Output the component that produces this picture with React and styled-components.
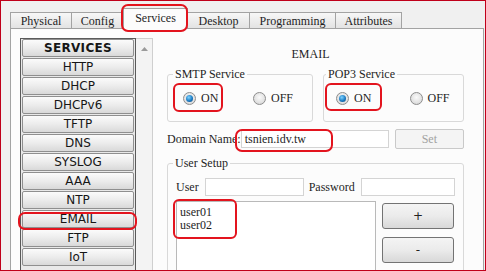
import React from 'react';
import styled, { createGlobalStyle, css } from 'styled-components';

const SERIF = `"Liberation Serif", "Times New Roman", serif`;
const SANS = `"DejaVu Sans", Verdana, sans-serif`;

const Global = createGlobalStyle`
  html, body { margin: 0; padding: 0; background: #f0f0f0; }
  *, *::before, *::after { box-sizing: border-box; }
`;

const Frame = styled.div`
  position: relative;
  width: 486px;
  height: 271px;
  border: 1px solid #c0001a;
  background: #f0f0f0;
  overflow: hidden;
  padding: 7px 1px 0 9px;
  display: flex;
  flex-direction: column;
  font-family: ${SERIF};
  font-size: 12px;
  color: #1e1e1e;
`;

const TabBar = styled.div`
  display: flex;
  align-items: flex-end;
  height: 20px;
  position: relative;
  z-index: 2;
`;

const Tab = styled.div`
  width: ${(p) => p.$w}px;
  height: 16px;
  margin-right: -1px;
  border: 1px solid #a3a3a3;
  border-bottom: none;
  background: linear-gradient(#f7f7f7, #e3e3e3);
  display: flex;
  align-items: center;
  justify-content: center;
  line-height: 14px;
  white-space: nowrap;
  ${(p) =>
    p.$active &&
    css`
      height: 21px;
      margin-bottom: -1px;
      background: #fcfcfc;
      position: relative;
      z-index: 3;
      padding-bottom: 2px;
    `}
`;

const Panel = styled.div`
  flex: 1;
  border: 1px solid #a3a3a3;
  border-bottom: none;
  background: #fcfcfc;
  display: flex;
  align-items: flex-start;
  padding: 9px 19px 0 9px;
  min-height: 0;
`;

const Sidebar = styled.div`
  width: 133px;
  height: 240px;
  display: flex;
  flex-shrink: 0;
`;

const ServiceList = styled.div`
  width: 116px;
  border: 1px solid #5a5a5a;
  border-bottom: none;
  padding: 0 1px;
  display: flex;
  flex-direction: column;
  gap: 1px;
  background: #e9e9e9;
`;

const ServiceButton = styled.div`
  height: 18px;
  flex-shrink: 0;
  border: 1px solid #8f8f8f;
  border-radius: 2px;
  background: linear-gradient(#fbfbfb 0%, #ececec 50%, #d9d9d9 100%);
  font-family: ${SANS};
  font-size: 12px;
  font-weight: ${(p) => (p.$head ? 'bold' : 'normal')};
  letter-spacing: ${(p) => (p.$head ? '0.3px' : '0')};
  color: #161616;
  display: flex;
  align-items: center;
  justify-content: center;
  line-height: 14px;
`;

const ScrollTrack = styled.div`
  width: 17px;
  border: 1px solid #cfcfcf;
  border-left: none;
  border-bottom: none;
  background: #f3f3f3;
  display: flex;
  justify-content: center;
  padding-top: 8px;
`;

const RightCol = styled.div`
  flex: 1;
  margin-left: 14px;
  padding-top: 9px;
  display: flex;
  flex-direction: column;
  min-width: 0;
`;

const Title = styled.div`
  text-align: center;
  padding-right: 10px;
  line-height: 14px;
  height: 14px;
`;

const GroupRow = styled.div`
  display: flex;
  gap: 10px;
  margin-top: 6px;
`;

const Group = styled.fieldset`
  margin: 0;
  width: ${(p) => (p.$w ? `${p.$w}px` : 'auto')};
  flex: ${(p) => (p.$w ? '0 0 auto' : '1')};
  border: 1px solid #d9d9d9;
  border-radius: 3px;
  padding: ${(p) => p.$pad};
  min-width: 0;
`;

const Legend = styled.legend`
  padding: 0 2px;
  line-height: 14px;
  font-size: 12px;
`;

const RadioRow = styled.div`
  display: grid;
  grid-template-columns: 1fr 1fr;
  height: 13px;
`;

const RadioItem = styled.label`
  display: flex;
  align-items: center;
  gap: ${(p) => p.$gap || 5}px;
  padding-left: ${(p) => p.$pl}px;
  line-height: 13px;
  font-size: 12px;
`;

const RadioDot = styled.span`
  width: 13px;
  height: 13px;
  border-radius: 50%;
  border: 1px solid #8d8d8d;
  background: radial-gradient(circle at 50% 40%, #fafafa 0%, #e2e2e2 60%, #cdcdcd 100%);
  display: flex;
  align-items: center;
  justify-content: center;
  flex-shrink: 0;
  &::after {
    content: '';
    display: ${(p) => (p.$on ? 'block' : 'none')};
    width: 7px;
    height: 7px;
    border-radius: 50%;
    background: radial-gradient(circle at 40% 35%, #7fd3ff 0%, #1c7cc4 55%, #0b3f75 100%);
  }
`;

const DomainRow = styled.div`
  display: flex;
  align-items: center;
  height: 20px;
  margin-top: 7px;
`;

const Label = styled.span`
  white-space: nowrap;
  line-height: 14px;
  margin-right: ${(p) => p.$mr || 0}px;
  margin-left: ${(p) => p.$ml || 0}px;
`;

const TextBox = styled.div`
  height: 18px;
  width: ${(p) => (p.$w ? `${p.$w}px` : 'auto')};
  flex: ${(p) => (p.$w ? '0 0 auto' : '1')};
  border: 1px solid #d4d4d4;
  background: #fff;
  padding: 0 3px;
  line-height: 16px;
  font-size: 12px;
  white-space: nowrap;
`;

const SetButton = styled.div`
  margin-left: 6px;
  width: 73px;
  height: 20px;
  border: 1px solid #c9c9c9;
  border-radius: 2px;
  background: #f4f4f4;
  color: #a2a2a2;
  display: flex;
  align-items: center;
  justify-content: center;
`;

const UserSetup = styled(Group)`
  margin-top: 7px;
  height: 140px;
`;

const UserRow = styled.div`
  display: flex;
  align-items: center;
  height: 18px;
`;

const ListRow = styled.div`
  display: flex;
  margin-top: 5px;
`;

const ListBox = styled.div`
  width: 200px;
  height: 90px;
  border: 1px solid #b9b9b9;
  background: #fff;
  padding: 4px 3px;
  line-height: 12.5px;
  font-size: 12px;
`;

const ButtonCol = styled.div`
  margin-left: 6px;
  padding-top: 2px;
  display: flex;
  flex-direction: column;
  gap: 8px;
`;

const ActionButton = styled.div`
  width: 72px;
  height: 26px;
  border: 1px solid #737373;
  border-radius: 3px;
  background: linear-gradient(#f4f4f4 0%, #ebebeb 50%, #d8d8d8 100%);
  display: flex;
  align-items: center;
  justify-content: center;
  font-family: ${SANS};
  font-size: 12px;
  color: #222;
`;

const Mark = styled.div`
  position: absolute;
  border: 2px solid #e3141e;
  border-radius: ${(p) => p.$r || 6}px;
  pointer-events: none;
  z-index: 10;
`;

const tabs = [
  ['Physical', 62],
  ['Config', 53],
  ['Services', 65, true],
  ['Desktop', 63],
  ['Programming', 87],
  ['Attributes', 67],
];

const services = ['HTTP', 'DHCP', 'DHCPv6', 'TFTP', 'DNS', 'SYSLOG', 'AAA', 'NTP', 'EMAIL', 'FTP', 'IoT'];

// annotation rectangles in page coordinates (frame border is 1px)
const marks = [
  { x: 121, y: 4, w: 67, h: 28, r: 7 },
  { x: 173, y: 83, w: 50, h: 29, r: 6 },
  { x: 325, y: 83, w: 57, h: 28, r: 6 },
  { x: 235, y: 129, w: 98, h: 23, r: 7 },
  { x: 18, y: 212, w: 119, h: 18, r: 7 },
  { x: 173, y: 199, w: 64, h: 40, r: 6 },
];

export default function App() {
  return (
    <>
      <Global />
      <Frame>
        <TabBar>
          {tabs.map(([t, w, a]) => (
            <Tab key={t} $w={w} $active={a}>
              {t}
            </Tab>
          ))}
        </TabBar>
        <Panel>
          <Sidebar>
            <ServiceList>
              <ServiceButton $head>SERVICES</ServiceButton>
              {services.map((s) => (
                <ServiceButton key={s}>{s}</ServiceButton>
              ))}
            </ServiceList>
            <ScrollTrack>
              <svg width="7" height="4" viewBox="0 0 7 4">
                <path d="M0 4 L3.5 0 L7 4 Z" fill="#9a9a9a" />
              </svg>
            </ScrollTrack>
          </Sidebar>
          <RightCol>
            <Title>EMAIL</Title>
            <GroupRow>
              <Group $w={146} $pad="11px 0 16px 0">
                <Legend style={{ marginLeft: 5 }}>SMTP Service</Legend>
                <RadioRow>
                  <RadioItem $pl={15}>
                    <RadioDot $on />
                    ON
                  </RadioItem>
                  <RadioItem $pl={13}>
                    <RadioDot />
                    OFF
                  </RadioItem>
                </RadioRow>
              </Group>
              <Group $pad="11px 0 16px 0">
                <Legend style={{ marginLeft: 2 }}>POP3 Service</Legend>
                <RadioRow>
                  <RadioItem $pl={12}>
                    <RadioDot $on />
                    ON
                  </RadioItem>
                  <RadioItem $pl={16}>
                    <RadioDot />
                    OFF
                  </RadioItem>
                </RadioRow>
              </Group>
            </GroupRow>
            <DomainRow>
              <Label>Domain Name:</Label>
              <TextBox $w={148}>tsnien.idv.tw</TextBox>
              <SetButton>Set</SetButton>
            </DomainRow>
            <UserSetup $pad="8px 8px 0 8px">
              <Legend style={{ marginLeft: -3 }}>User Setup</Legend>
              <UserRow>
                <Label $mr={6}>User</Label>
                <TextBox $w={99} />
                <Label $ml={5} $mr={6}>Password</Label>
                <TextBox />
              </UserRow>
              <ListRow>
                <ListBox>
                  <div>user01</div>
                  <div>user02</div>
                </ListBox>
                <ButtonCol>
                  <ActionButton>+</ActionButton>
                  <ActionButton>-</ActionButton>
                </ButtonCol>
              </ListRow>
            </UserSetup>
          </RightCol>
        </Panel>
        {marks.map((m, i) => (
          <Mark key={i} $r={m.r} style={{ left: m.x - 1, top: m.y - 1, width: m.w, height: m.h }} />
        ))}
      </Frame>
    </>
  );
}
